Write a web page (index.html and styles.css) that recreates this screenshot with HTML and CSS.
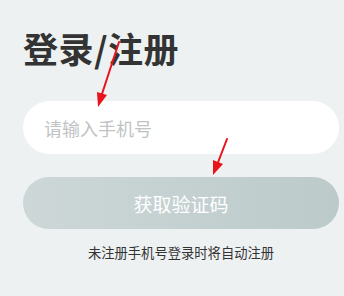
FILE: index.html
```html
<!DOCTYPE html>
<html lang="zh-CN">
<head>
  <meta charset="UTF-8" />
  <meta name="viewport" content="width=device-width, initial-scale=1" />
  <title>登录/注册</title>
  <link rel="stylesheet" href="styles.css">
</head>
<body>

<main class="login">
  <h1 class="login-title">登录/注册</h1>

  <form class="login-form">
    <input type="tel" class="phone-input" placeholder="请输入手机号" />
    <button type="button" class="code-btn">获取验证码</button>
  </form>

  <p class="login-tip">未注册手机号登录时将自动注册</p>
</main>

<!-- annotation arrows drawn over the screenshot -->
<svg class="marks" width="344" height="296" viewBox="0 0 344 296">
  <line x1="119" y1="42" x2="101" y2="97" stroke="#e8141b" stroke-width="2" stroke-linecap="round" />
  <polygon points="98,107 107,95 97,92" fill="#e8141b" />
  <line x1="227" y1="139" x2="217" y2="165" stroke="#e8141b" stroke-width="2" stroke-linecap="round" />
  <polygon points="213,175 223,164 213,160" fill="#e8141b" />
</svg>

</body>
</html>
```

FILE: styles.css
```css
:root {
  --page-bg: #edf1f2;
  --text-dark: #333;
  --placeholder: #bfc3c4;
}

* {
  box-sizing: border-box;
}
body {
  margin: 0;
  height: 100vh;
  background-color: var(--page-bg);
  font-family: "Noto Sans CJK SC", "Noto Sans", sans-serif;
  color: var(--text-dark);
  position: relative;
  overflow: hidden;
}

.login {
  padding: 28px 5px 0 23px;
}
.login-title {
  margin: 0;
  font-size: 35px;
  line-height: 40px;
  font-weight: 700;
  letter-spacing: 0.5px;
  color: #333;
}

.login-form {
  display: flex;
  flex-direction: column;
  gap: 23px;
  margin-top: 33px;
}
.phone-input {
  height: 53px;
  border: none;
  border-radius: 9999px;
  background: #fff;
  padding: 0 21px;
  font-family: inherit;
  font-size: 18px;
  color: var(--text-dark);
  outline: none;
}
.phone-input::placeholder {
  color: var(--placeholder);
}
.code-btn {
  height: 52px;
  border: none;
  border-radius: 9999px;
  background: linear-gradient(90deg, #cdd7d8, #bccaca);
  color: #fff;
  font-family: inherit;
  font-size: 19px;
  cursor: pointer;
}

.login-tip {
  margin: 14px 0 0;
  text-align: center;
  font-size: 13.3px;
  line-height: 20px;
  color: #333;
}

.marks {
  position: absolute;
  left: 0;
  top: 0;
  pointer-events: none;
}
```
